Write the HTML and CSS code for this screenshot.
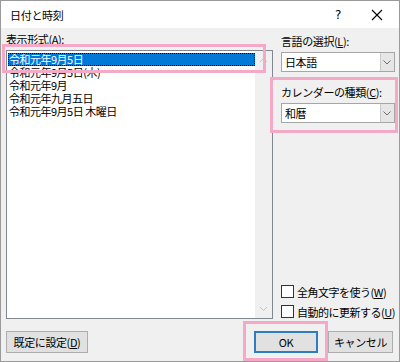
FILE: index.html
```html
<!DOCTYPE html>
<html lang="ja">
<head>
  <meta charset="UTF-8" />
  <title>日付と時刻</title>
  <link rel="stylesheet" href="styles.css">
</head>
<body>
  <div class="dialog">

    <!-- Title bar -->
    <div class="titlebar">
      <span class="title">日付と時刻</span>
      <span class="help">?</span>
      <span class="close">
        <svg width="12" height="12" viewBox="0 0 12 12"><path d="M1 1L11 11M11 1L1 11" stroke="#000" stroke-width="1.1" fill="none"/></svg>
      </span>
    </div>

    <div class="content">
      <!-- Left: format list -->
      <div class="left">
        <div class="label">表示形式(<u>A</u>):</div>
        <div class="listbox">
          <ul class="items">
            <li class="selected"><span>令和元年9月5日</span></li>
            <li>令和元年9月5日(木)</li>
            <li>令和元年9月</li>
            <li>令和元年九月五日</li>
            <li>令和元年9月5日 木曜日</li>
          </ul>
          <div class="scrollbar">
            <svg width="9" height="6" viewBox="0 0 9 6"><path d="M1 5L4.5 1.5L8 5" stroke="#c4c4c4" fill="none"/></svg>
            <svg width="9" height="6" viewBox="0 0 9 6"><path d="M1 1L4.5 4.5L8 1" stroke="#c4c4c4" fill="none"/></svg>
          </div>
        </div>
      </div>

      <!-- Right: language / calendar -->
      <div class="right">
        <div class="label lang-label">言語の選択(<u>L</u>):</div>
        <div class="combo">
          <span class="value">日本語</span>
          <span class="arrow"><svg width="8" height="5" viewBox="0 0 8 5"><path d="M0.5 0.5L4 4L7.5 0.5" stroke="#6d6d6d" fill="none"/></svg></span>
        </div>
        <div class="label cal-label">カレンダーの種類(<u>C</u>):</div>
        <div class="combo">
          <span class="value">和暦</span>
          <span class="arrow"><svg width="8" height="5" viewBox="0 0 8 5"><path d="M0.5 0.5L4 4L7.5 0.5" stroke="#6d6d6d" fill="none"/></svg></span>
        </div>

        <div class="checks">
          <label class="check"><span class="box"></span>全角文字を使う(<u>W</u>)</label>
          <label class="check"><span class="box"></span>自動的に更新する(<u>U</u>)</label>
        </div>
      </div>
    </div>

    <!-- Buttons -->
    <div class="buttons">
      <button class="btn">既定に設定(<u>D</u>)</button>
      <div class="grow"></div>
      <button class="btn ok">OK</button>
      <button class="btn cancel">キャンセル</button>
    </div>

    <!-- Pink highlight frames -->
    <div class="mark mark-list"></div>
    <div class="mark mark-calendar"></div>
    <div class="mark mark-ok"></div>
  </div>
</body>
</html>
```

FILE: styles.css
```css
body {
  margin: 0;
  padding: 0;
  background-color: #fff;
  font-family: "Noto Sans CJK JP", "Noto Sans", sans-serif;
  font-size: 11px;
  color: #000;
}

u {
  text-decoration: underline;
  text-underline-offset: 1px;
}

.dialog {
  position: relative;
  width: 400px;
  height: 362px;
  box-sizing: border-box;
  border: 1px solid #9a9a9a;
  background-color: #f0f0f0;
  display: flex;
  flex-direction: column;
  overflow: hidden;
}

/* Title bar */
.titlebar {
  height: 27px;
  background-color: #fff;
  display: flex;
  align-items: center;
  padding-left: 9px;
  flex-shrink: 0;
}

.title {
  flex: 1;
  font-size: 11px;
  letter-spacing: -0.3px;
}

.help {
  width: 16px;
  font-size: 12px;
  font-family: "DejaVu Sans", sans-serif;
  margin-right: 20px;
}

.close {
  width: 12px;
  height: 12px;
  margin-right: 16px;
  display: flex;
}

/* Main area */
.content {
  display: grid;
  grid-template-columns: 267px 1fr;
  column-gap: 8px;
  padding: 5px 8px 0 5px;
  height: 286px;
}

.label {
  height: 13px;
  line-height: 13px;
  letter-spacing: -0.4px;
  white-space: nowrap;
}

.left {
  display: flex;
  flex-direction: column;
}

.listbox {
  margin-top: 4px;
  flex: 1;
  background-color: #fff;
  border: 1px solid #828790;
  display: flex;
}

.items {
  list-style: none;
  margin: 0;
  padding: 2px 0 0 1px;
  flex: 1;
}

.items li {
  height: 13px;
  line-height: 13px;
  padding-left: 1px;
  letter-spacing: -0.5px;
  white-space: nowrap;
}

.items li.selected {
  background-color: #0078d7;
  color: #fff;
  outline: 1px dotted #000;
  outline-offset: -1px;
}

.scrollbar {
  width: 17px;
  background-color: #f0f0f0;
  display: flex;
  flex-direction: column;
  justify-content: space-between;
  align-items: center;
  padding: 6px 0 6px;
}

.right {
  display: flex;
  flex-direction: column;
}

.lang-label {
  margin-top: 2px;
}

.cal-label {
  margin-top: 14px;
}

.combo {
  margin-top: 4px;
  height: 20px;
  box-sizing: border-box;
  background-color: #fff;
  border: 1px solid #a6a6a6;
  display: flex;
}

.combo .value {
  flex: 1;
  line-height: 18px;
  padding-left: 3px;
  letter-spacing: -0.4px;
}

.combo .arrow {
  width: 13px;
  background-color: #e6e6e6;
  border-left: 1px solid #c8c8c8;
  display: flex;
  align-items: center;
  justify-content: center;
}

.checks {
  margin-top: auto;
  display: flex;
  flex-direction: column;
  gap: 7px;
  margin-bottom: 1px;
}

.check {
  display: flex;
  align-items: center;
  height: 13px;
  letter-spacing: -0.5px;
  white-space: nowrap;
}

.check .box {
  width: 13px;
  height: 13px;
  box-sizing: border-box;
  border: 1px solid #333;
  background-color: #fff;
  margin-right: 3px;
  flex-shrink: 0;
}

/* Bottom buttons */
.buttons {
  display: flex;
  padding: 12px 6px 0 5px;
}

.grow {
  flex: 1;
}

.btn {
  height: 22px;
  box-sizing: border-box;
  background-color: #e1e1e1;
  border: 1px solid #adadad;
  font-family: inherit;
  font-size: 11px;
  letter-spacing: -0.4px;
  padding: 0;
  margin: 0;
  color: #000;
}

.btn:first-child {
  width: 82px;
}

.btn.ok {
  width: 64px;
  border: 2px solid #2c7dc4;
}

.btn.cancel {
  width: 65px;
  margin-left: 10px;
}

/* Pink highlight frames */
.mark {
  position: absolute;
  border: 3px solid #f4a9c7;
  box-sizing: border-box;
}

.mark-list {
  left: 1px;
  top: 43px;
  width: 264px;
  height: 29px;
}

.mark-calendar {
  left: 269px;
  top: 76px;
  width: 128px;
  height: 56px;
}

.mark-ok {
  left: 242px;
  top: 320px;
  width: 85px;
  height: 40px;
}
```
